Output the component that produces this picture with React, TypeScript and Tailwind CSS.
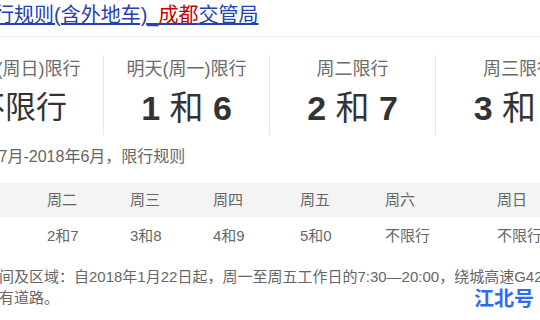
const cards = [
  { label: '今天(周日)限行', value: null },
  { label: '明天(周一)限行', value: ['1', '6'] },
  { label: '周二限行', value: ['2', '7'] },
  { label: '周三限行', value: ['3', '8'] },
];

const days = ['周一', '周二', '周三', '周四', '周五', '周六', '周日'];
const plates = ['1和6', '2和7', '3和8', '4和9', '5和0', '不限行', '不限行'];

export default function App() {
  return (
    <div className="relative w-[540px] h-[320px] overflow-hidden bg-white font-['Liberation_Sans','Noto_Sans_CJK_SC',sans-serif]">
      {/* title link */}
      <div className="h-[37px] border-b border-[#ececec] pt-[2px] whitespace-nowrap">
        <a className="ml-[-66px] text-[20px] leading-[26px] text-[#2440b3] underline">
          成都限行规则(含外地车)_<span className="text-[#cc0000]">成都</span>交管局
        </a>
      </div>

      {/* today / tomorrow cards */}
      <div className="mt-[18px] ml-[-62px] flex">
        {cards.map((card, i) => (
          <div
            key={card.label}
            className={`w-[166px] h-[80px] shrink-0 flex flex-col items-center ${i < 3 ? 'border-r border-[#e6e6e6]' : ''}`}
          >
            <p className="mt-[4px] text-[18px] leading-[20px] text-[#6b6b6b] whitespace-nowrap">{card.label}</p>
            {card.value ? (
              <p className="mt-[9px] text-[34px] leading-[40px] text-[#333] whitespace-nowrap">
                <span className="font-bold">{card.value[0]}</span> 和 <span className="font-bold">{card.value[1]}</span>
              </p>
            ) : (
              <p className="mt-[9px] text-[31px] leading-[40px] text-[#333] whitespace-nowrap">不限行</p>
            )}
          </div>
        ))}
      </div>

      <p className="mt-[11px] ml-[-53px] text-[16px] leading-[22px] text-[#666] whitespace-nowrap">
        2017年7月-2018年6月，限行规则
      </p>

      {/* weekly table */}
      <div className="mt-[15px] text-[15px] text-[#666]">
        <div className="h-[34px] bg-[#f4f4f4]">
          <div className="ml-[-36px] grid h-full grid-cols-[83px_83px_83px_87px_85px_112px_1fr] items-center whitespace-nowrap">
            {days.map((d) => (
              <span key={d}>{d}</span>
            ))}
          </div>
        </div>
        <div className="h-[38px]">
          <div className="ml-[-36px] grid h-full grid-cols-[83px_83px_83px_87px_85px_112px_1fr] items-center whitespace-nowrap">
            {plates.map((p, i) => (
              <span key={i}>{p}</span>
            ))}
          </div>
        </div>
      </div>

      <div className="mt-[11px] text-[15px] leading-[21px] text-[#666] whitespace-nowrap">
        <p className="ml-[-46px]">限行时间及区域：自2018年1月22日起，周一至周五工作日的7:30—20:00，绕城高速G4201（不含）</p>
        <p className="ml-[-46px]">以内所有道路。</p>
      </div>

      {/* watermark */}
      <span className="absolute right-[6px] bottom-[10px] text-[20px] leading-[24px] font-bold text-[#2b6cf3] font-['Noto_Sans_CJK_SC',sans-serif]">
        江北号
      </span>
    </div>
  );
}
